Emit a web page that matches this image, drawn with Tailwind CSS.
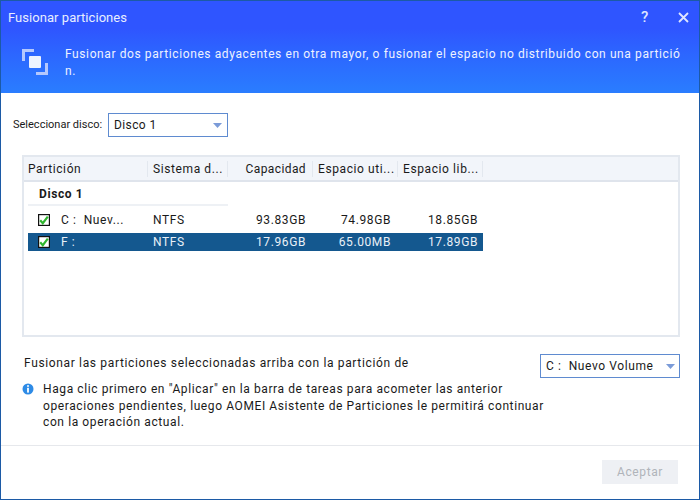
<!DOCTYPE html>
<html lang="en">
<head>
    <meta charset="UTF-8">
    <title>Fusionar particiones</title>
    <script src="https://cdn.jsdelivr.net/npm/@tailwindcss/browser@4"></script>
</head>
<body class="bg-white">
    <div class="w-[700px] h-[500px] flex flex-col border border-[#1c5aa6] font-['Roboto',sans-serif] text-[12px] text-[#1a1a1a] tracking-[0.6px] overflow-hidden">
        <!-- header -->
        <div class="h-[92px] shrink-0 bg-gradient-to-b from-[#2f55ff] from-30% to-[#2a7dff] text-white">
            <div class="h-[33px] flex items-center pl-[7px] pr-[10px]">
                <span class="text-[13px] tracking-[0.05px] text-[#e8eeff]">Fusionar particiones</span>
                <span class="ml-auto text-[15px] font-medium text-[#dfe6ff] mr-[29px]">?</span>
                <svg width="11" height="11" viewBox="0 0 11 11"><path d="M1 1l9 9M10 1l-9 9" stroke="#dfe6ff" stroke-width="1.8" fill="none"/></svg>
            </div>
            <div class="flex pl-[21px] pt-[12px]">
                <svg width="26" height="26" viewBox="0 0 26 26" class="mt-[3px] shrink-0">
                    <path d="M0 0h12v3H3v9H0z" fill="#b5c8fd"/>
                    <path d="M26 14v12H14v-3h9v-9z" fill="#b5c8fd"/>
                    <rect x="7" y="7" width="12" height="12" rx="1" fill="#edf3ff"/>
                </svg>
                <p class="ml-[17px] w-[620px] leading-[17px] text-[#eef2ff] break-all">Fusionar dos particiones adyacentes en otra mayor, o fusionar el espacio no distribuido con una partición.</p>
            </div>
        </div>

        <!-- disk select -->
        <div class="flex items-center pl-[12px] pt-[20px] shrink-0">
            <span class="w-[95px] text-[11px] tracking-[0px]">Seleccionar disco:</span>
            <div class="w-[120px] h-[24px] border border-[#5f8bd0] flex items-center pl-[5px] pr-[5px] tracking-[0.4px]">
                <span>Disco 1</span>
                <svg width="9" height="5" viewBox="0 0 9 5" class="ml-auto"><path d="M0 0h9L4.500 5z" fill="#7b9bd8"/></svg>
            </div>
        </div>

        <!-- partition table -->
        <div class="ml-[21px] mr-[19px] mt-[18px] h-[182px] border-2 border-[#e3e8ef] shrink-0">
            <div class="flex h-[22px] pt-[1px] box-content bg-[#f2f5fa] border-b-2 border-[#dfe4ec] items-center">
                <div class="w-[124px] pl-[4px] border-r border-[#e3e8ef] leading-[16px]">Partición</div>
                <div class="w-[80px] pl-[5px] border-r border-[#e3e8ef] leading-[16px]">Sistema d...</div>
                <div class="w-[85px] pr-[6px] text-right border-r border-[#e3e8ef] leading-[16px] tracking-[0.4px]">Capacidad</div>
                <div class="w-[85px] pl-[5px] border-r border-[#e3e8ef] leading-[16px]">Espacio uti...</div>
                <div class="w-[85px] pl-[5px] border-r border-[#e3e8ef] leading-[16px]">Espacio lib...</div>
            </div>
            <div class="pl-[4px] w-[459px]">
                <div class="h-[24px] pt-[1px] flex items-center pl-[11px] font-bold border-b-2 border-b-[#eef1f5] w-[200px]">Disco 1</div>
                <div class="h-[27px] flex items-center">
                    <div class="w-[120px] flex items-center pl-[10px]">
                        <svg width="12" height="12" viewBox="0 0 12 12" class="shrink-0"><rect x=".6" y=".6" width="10.800" height="10.800" fill="#fff" stroke="#111" stroke-width="1.200"/><path d="M2.200 6.200l2.600 3 5-6.600" stroke="#2fb52f" stroke-width="2.200" fill="none"/></svg>
                        <span class="ml-[11px] whitespace-pre">C :  Nuev...</span>
                    </div>
                    <span class="w-[80px] pl-[5px]">NTFS</span>
                    <span class="w-[85px] pr-[7px] text-right">93.83GB</span>
                    <span class="w-[85px] pr-[7px] text-right">74.98GB</span>
                    <span class="w-[85px] pr-[5px] text-right">18.85GB</span>
                </div>
                <div class="h-[18px] flex items-center bg-[#14588f] text-[#e9f0f7]">
                    <div class="w-[120px] flex items-center pl-[10px]">
                        <svg width="12" height="12" viewBox="0 0 12 12" class="shrink-0"><rect x=".6" y=".6" width="10.800" height="10.800" fill="#fff" stroke="#111" stroke-width="1.200"/><path d="M2.200 6.200l2.600 3 5-6.600" stroke="#2fb52f" stroke-width="2.200" fill="none"/></svg>
                        <span class="ml-[11px]">F :</span>
                    </div>
                    <span class="w-[80px] pl-[5px]">NTFS</span>
                    <span class="w-[85px] pr-[7px] text-right">17.96GB</span>
                    <span class="w-[85px] pr-[7px] text-right">65.00MB</span>
                    <span class="w-[85px] pr-[5px] text-right">17.89GB</span>
                </div>
            </div>
        </div>

        <!-- merge target -->
        <div class="flex pl-[23px] pr-[19px] mt-[17px] shrink-0">
            <span class="tracking-[0.65px]">Fusionar las particiones seleccionadas arriba con la partición de</span>
            <div class="ml-auto w-[140px] h-[24px] border border-[#5f8bd0] flex items-center pl-[5px] pr-[4px] whitespace-pre">
                <span>C :  Nuevo Volume</span>
                <svg width="9" height="5" viewBox="0 0 9 5" class="ml-auto"><path d="M0 0h9L4.500 5z" fill="#7b9bd8"/></svg>
            </div>
        </div>

        <!-- note -->
        <div class="flex pl-[21px] mt-[3px] shrink-0">
            <svg width="12" height="12" viewBox="0 0 12 12" class="mt-[2px] shrink-0"><circle cx="6" cy="6" r="5.500" fill="#2e8be6"/><rect x="5.100" y="2.200" width="1.800" height="1.600" fill="#fff"/><rect x="5.100" y="4.800" width="1.800" height="4.800" fill="#fff"/></svg>
            <p class="ml-[9px] w-[510px] leading-[16.5px]">Haga clic primero en "Aplicar" en la barra de tareas para acometer las anterior operaciones pendientes, luego AOMEI Asistente de Particiones le permitirá continuar con la operación actual.</p>
        </div>

        <!-- footer -->
        <div class="mt-auto h-[54px] border-t border-[#e6e8ec] flex items-center justify-end pr-[21px] pb-[2px] shrink-0">
            <div class="w-[76px] h-[24px] bg-[#eef0f4] text-[#b0b4ba] flex items-center justify-center">Aceptar</div>
        </div>
    </div>
</body>
</html>
